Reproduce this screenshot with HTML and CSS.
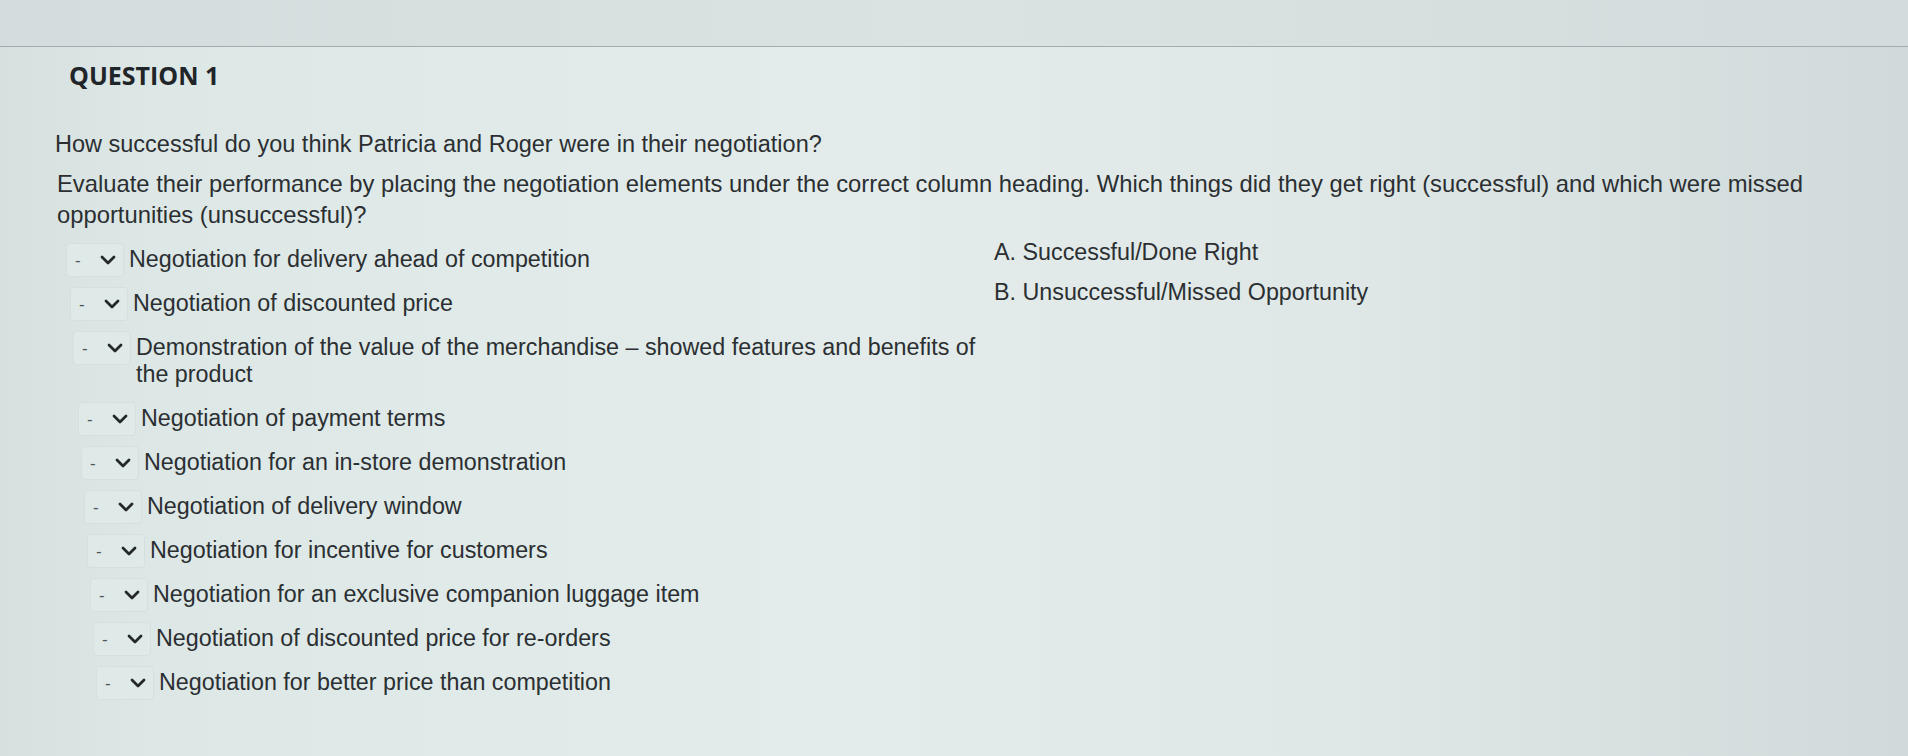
FILE: index.html
```html
<!DOCTYPE html>
<html lang="en">
<head>
<meta charset="utf-8">
<title>Question 1</title>
<link rel="stylesheet" href="styles.css">
</head>
<body>
<div class="page">
  <div class="topbar"></div>
  <div class="content">
    <h2 class="qtitle">QUESTION 1</h2>
    <p class="qtext">How successful do you think Patricia and Roger were in their negotiation?</p>
    <p class="qtext qtext-2">Evaluate their performance by placing the negotiation elements under the correct column heading. Which things did they get right (successful) and which were missed opportunities (unsuccessful)?</p>
    <div class="matching">
      <ul class="items">
        <li class="item"><span class="sel"><span class="dash">-</span><svg class="chev" viewBox="0 0 16 10" width="16" height="10"><path d="M2 2 L8 8 L14 2"/></svg></span><span class="itext">Negotiation for delivery ahead of competition</span></li>
        <li class="item"><span class="sel"><span class="dash">-</span><svg class="chev" viewBox="0 0 16 10" width="16" height="10"><path d="M2 2 L8 8 L14 2"/></svg></span><span class="itext">Negotiation of discounted price</span></li>
        <li class="item"><span class="sel"><span class="dash">-</span><svg class="chev" viewBox="0 0 16 10" width="16" height="10"><path d="M2 2 L8 8 L14 2"/></svg></span><span class="itext">Demonstration of the value of the merchandise – showed features and benefits of the product</span></li>
        <li class="item"><span class="sel"><span class="dash">-</span><svg class="chev" viewBox="0 0 16 10" width="16" height="10"><path d="M2 2 L8 8 L14 2"/></svg></span><span class="itext">Negotiation of payment terms</span></li>
        <li class="item"><span class="sel"><span class="dash">-</span><svg class="chev" viewBox="0 0 16 10" width="16" height="10"><path d="M2 2 L8 8 L14 2"/></svg></span><span class="itext">Negotiation for an in-store demonstration</span></li>
        <li class="item"><span class="sel"><span class="dash">-</span><svg class="chev" viewBox="0 0 16 10" width="16" height="10"><path d="M2 2 L8 8 L14 2"/></svg></span><span class="itext">Negotiation of delivery window</span></li>
        <li class="item"><span class="sel"><span class="dash">-</span><svg class="chev" viewBox="0 0 16 10" width="16" height="10"><path d="M2 2 L8 8 L14 2"/></svg></span><span class="itext">Negotiation for incentive for customers</span></li>
        <li class="item"><span class="sel"><span class="dash">-</span><svg class="chev" viewBox="0 0 16 10" width="16" height="10"><path d="M2 2 L8 8 L14 2"/></svg></span><span class="itext">Negotiation for an exclusive companion luggage item</span></li>
        <li class="item"><span class="sel"><span class="dash">-</span><svg class="chev" viewBox="0 0 16 10" width="16" height="10"><path d="M2 2 L8 8 L14 2"/></svg></span><span class="itext">Negotiation of discounted price for re-orders</span></li>
        <li class="item"><span class="sel"><span class="dash">-</span><svg class="chev" viewBox="0 0 16 10" width="16" height="10"><path d="M2 2 L8 8 L14 2"/></svg></span><span class="itext">Negotiation for better price than competition</span></li>
      </ul>
      <ul class="choices">
        <li class="choice">A. Successful/Done Right</li>
        <li class="choice">B. Unsuccessful/Missed Opportunity</li>
      </ul>
    </div>
  </div>
</div>
</body>
</html>
```

FILE: styles.css
```css
* { box-sizing: border-box; }

html, body {
  margin: 0;
  padding: 0;
  height: 100%;
}

body {
  font-family: "Liberation Sans", Arial, sans-serif;
  color: #2b2f32;
  background: linear-gradient(90deg, #d6e0df 0%, #dde7e6 8%, #e0eae9 25%, #e3ecea 45%, #dfe8e7 70%, #d0dada 100%);
  overflow: hidden;
}

.page {
  min-height: 756px;
}

.topbar {
  height: 47px;
  border-bottom: 1px solid #a3adae;
  background: linear-gradient(90deg, #d3dddd 0%, #d9e3e2 50%, #d2dcdc 100%);
}

.content {
  padding: 11px 0 0 55px;
}

.qtitle {
  margin: 0 0 0 14px;
  font-family: "Open Sans", "Liberation Sans", sans-serif;
  font-weight: 700;
  font-size: 25px;
  line-height: 34px;
  color: #1f2529;
}

.qtext {
  margin: 37px 0 0 0;
  font-size: 23.5px;
  line-height: 30px;
  max-width: 1800px;
}

.qtext-2 {
  margin-top: 9px;
  padding-left: 2px;
  font-size: 23.8px;
  line-height: 31px;
}

.matching {
  display: grid;
  grid-template-columns: 939px 1fr;
  margin-top: 9px;
}

.items, .choices {
  list-style: none;
  margin: 0;
  padding: 0;
}

.items {
  display: flex;
  flex-direction: column;
  gap: 10px;
  padding-top: 4px;
}

.item {
  display: flex;
  align-items: flex-start;
  gap: 5px;
  margin-left: 11px;
}

.item:nth-child(2) { margin-left: 15px; }
.item:nth-child(3) { margin-left: 18px; }
.item:nth-child(4) { margin-left: 23px; }
.item:nth-child(5) { margin-left: 26px; }
.item:nth-child(6) { margin-left: 29px; }
.item:nth-child(7) { margin-left: 32px; }
.item:nth-child(8) { margin-left: 35px; }
.item:nth-child(9) { margin-left: 38px; }
.item:nth-child(10) { margin-left: 41px; }

.sel {
  flex: none;
  display: flex;
  align-items: center;
  width: 58px;
  height: 34px;
  padding-left: 8px;
  gap: 19px;
  border: 1px solid #d6dfdf;
  border-radius: 4px;
  background: #dfe9e8;
}

.dash {
  font-size: 17px;
  color: #4f5558;
  line-height: 1;
}

.chev {
  display: block;
  fill: none;
  stroke: #24282b;
  stroke-width: 2.8;
  stroke-linecap: round;
  stroke-linejoin: round;
}

.itext {
  font-size: 23.3px;
  line-height: 27px;
  padding-top: 3px;
  padding-bottom: 4px;
  max-width: 850px;
}

.choices {
  display: flex;
  flex-direction: column;
  gap: 13px;
}

.choice {
  font-size: 23.3px;
  line-height: 27px;
}
```
